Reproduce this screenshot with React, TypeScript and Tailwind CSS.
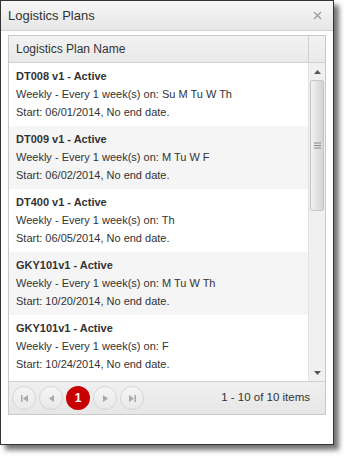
import React from "react";

const rows = [
  { t: "DT008 v1 - Active", d: "Weekly - Every 1 week(s) on: Su M Tu W Th", s: "Start: 06/01/2014, No end date." },
  { t: "DT009 v1 - Active", d: "Weekly - Every 1 week(s) on: M Tu W F", s: "Start: 06/02/2014, No end date." },
  { t: "DT400 v1 - Active", d: "Weekly - Every 1 week(s) on: Th", s: "Start: 06/05/2014, No end date." },
  { t: "GKY101v1 - Active", d: "Weekly - Every 1 week(s) on: M Tu W Th", s: "Start: 10/20/2014, No end date." },
  { t: "GKY101v1 - Active", d: "Weekly - Every 1 week(s) on: F", s: "Start: 10/24/2014, No end date." },
];

function PagerBtn({ children }: { children: React.ReactNode }) {
  return (
    <div className="w-[24px] h-[24px] rounded-full border border-[#d6d6d6] bg-gradient-to-b from-[#f4f4f4] to-[#e9e9e9] flex items-center justify-center">
      {children}
    </div>
  );
}

export default function App() {
  return (
    <div className="w-[348px] h-[460px] bg-white" style={{ fontFamily: "Arial, 'Liberation Sans', sans-serif" }}>
      <div className="w-[334px] h-[445px] border border-[#333333] bg-white flex flex-col shadow-[5px_5px_5px_rgba(0,0,0,0.55)]">
        <div className="h-[30px] shrink-0 flex items-center justify-between pl-[7px] pr-[10px] bg-gradient-to-b from-[#f7f7f7] to-[#e6e6e6] border-b border-[#d2d2d2]">
          <span className="text-[13px] text-[#333] leading-none">Logistics Plans</span>
          <svg width="9" height="9" viewBox="0 0 9 9" className="mr-[1px]">
            <path d="M1 1 L8 8 M8 1 L1 8" stroke="#9a9a9a" strokeWidth="1.3" />
          </svg>
        </div>
        <div className="px-[7px] pt-[4px]">
          <div className="border border-[#c8c8c8] h-[380px] flex flex-col">
            <div className="h-[27px] shrink-0 flex border-b border-[#d0d0d0] bg-gradient-to-b from-[#f2f2f2] to-[#e9e9e9]">
              <div className="flex-1 flex items-center pl-[7px] text-[12px] text-[#333]">Logistics Plan Name</div>
              <div className="w-[17px] border-l border-[#d0d0d0]" />
            </div>
            <div className="flex-1 flex overflow-hidden">
              <div className="flex-1 overflow-hidden">
                {rows.map((r, i) => (
                  <div key={i} className={`h-[63px] pl-[7px] pt-[4px] text-[11px] leading-[18px] text-[#333] ${i % 2 === 1 ? "bg-[#f5f5f5]" : "bg-white"}`}>
                    <div className="font-bold">{r.t}</div>
                    <div>{r.d}</div>
                    <div>{r.s}</div>
                  </div>
                ))}
              </div>
              <div className="w-[17px] bg-[#f0f0f0] border-l border-[#e2e2e2] flex flex-col">
                <div className="h-[17px] flex items-center justify-center">
                  <svg width="7" height="4" viewBox="0 0 7 4"><path d="M0 4 L3.5 0 L7 4 Z" fill="#555" /></svg>
                </div>
                <div className="mx-[1px] h-[131px] rounded-[2px] border border-[#c6c6c6] bg-gradient-to-r from-[#f2f2f2] via-[#e2e2e2] to-[#d4d4d4] flex items-center justify-center">
                  <svg width="7" height="7" viewBox="0 0 7 7">
                    <path d="M0 1 H7 M0 3.5 H7 M0 6 H7" stroke="#8a8a8a" strokeWidth="1" />
                  </svg>
                </div>
                <div className="flex-1" />
                <div className="h-[17px] flex items-center justify-center">
                  <svg width="7" height="4" viewBox="0 0 7 4"><path d="M0 0 L3.5 4 L7 0 Z" fill="#555" /></svg>
                </div>
              </div>
            </div>
            <div className="h-[33px] shrink-0 border-t border-[#d0d0d0] bg-gradient-to-b from-[#f0f0f0] to-[#e6e6e6] flex items-center pl-[3px] pr-[15px]">
              <div className="flex gap-[3px]">
                <PagerBtn>
                  <svg width="7" height="7" viewBox="0 0 7 7"><path d="M0 0 H1.5 V7 H0 Z M7 0 L2 3.5 L7 7 Z" fill="#a8a8a8" /></svg>
                </PagerBtn>
                <PagerBtn>
                  <svg width="5" height="7" viewBox="0 0 5 7"><path d="M5 0 L0 3.5 L5 7 Z" fill="#a8a8a8" /></svg>
                </PagerBtn>
                <div className="w-[24px] h-[24px] rounded-full bg-[#c80000] flex items-center justify-center text-white text-[12px] font-bold">1</div>
                <PagerBtn>
                  <svg width="5" height="7" viewBox="0 0 5 7"><path d="M0 0 L5 3.5 L0 7 Z" fill="#a8a8a8" /></svg>
                </PagerBtn>
                <PagerBtn>
                  <svg width="7" height="7" viewBox="0 0 7 7"><path d="M0 0 L5 3.5 L0 7 Z M5.5 0 H7 V7 H5.5 Z" fill="#a8a8a8" /></svg>
                </PagerBtn>
              </div>
              <div className="flex-1" />
              <span className="text-[11.5px] text-[#333]">1 - 10 of 10 items</span>
            </div>
          </div>
        </div>
      </div>
    </div>
  );
}
